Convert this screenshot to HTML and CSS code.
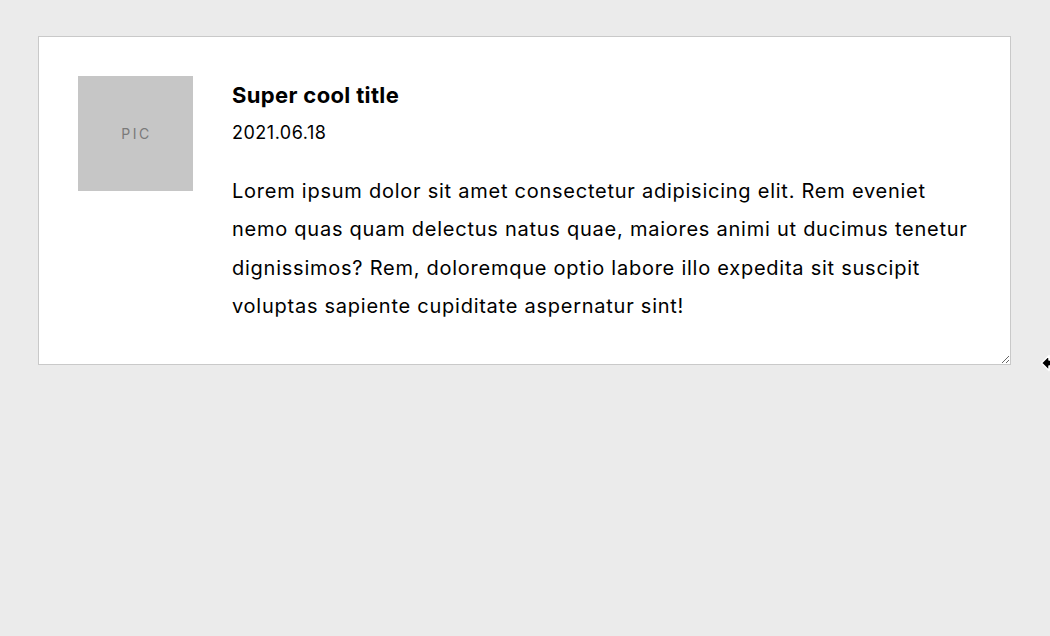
FILE: index.html
```html
<!DOCTYPE html>
<html lang="en">
<head>
<meta charset="utf-8">
<title>Card</title>
<link rel="stylesheet" href="styles.css">
</head>
<body>
<div class="card">
  <div class="pic">PIC</div>
  <div class="content">
    <h2 class="title">Super cool title</h2>
    <div class="date">2021.06.18</div>
    <p class="text">Lorem ipsum dolor sit amet consectetur adipisicing elit. Rem eveniet nemo quas quam delectus natus quae, maiores animi ut ducimus tenetur dignissimos? Rem, doloremque optio labore illo expedita sit suscipit voluptas sapiente cupiditate aspernatur sint!</p>
  </div>
</div>
<svg class="cursor" width="14" height="20" viewBox="0 0 14 20">
  <path d="M1.5 10 L9 2.5 L9 7 L13 7 L13 13 L9 13 L9 17.5 Z" fill="#000" stroke="#fff" stroke-width="1.5" stroke-linejoin="round"/>
</svg>
</body>
</html>
```
FILE: styles.css
```css
html, body {
  margin: 0;
  padding: 0;
}
body {
  background: #ebebeb;
  font-family: Inter, "Noto Sans", sans-serif;
  color: #000;
  padding: 36px 39px 0 38px;
  height: 636px;
  box-sizing: border-box;
  overflow: hidden;
  position: relative;
}
.card {
  background: #fff;
  border: 1px solid #c9c9c9;
  padding: 39px;
  display: flex;
  gap: 39px;
  align-items: flex-start;
  resize: both;
  overflow: auto;
  line-height: 38px;
}
.pic {
  flex: 0 0 115px;
  width: 115px;
  height: 115px;
  background: #c6c6c6;
  color: #7a7a7a;
  font-size: 14px;
  letter-spacing: 2.5px;
  display: flex;
  align-items: center;
  justify-content: center;
  padding-left: 2px;
  box-sizing: border-box;
}
.content {
  flex: 1;
  min-width: 0;
}
.title {
  margin: 0;
  font-size: 22px;
  font-weight: 700;
  line-height: 38px;
  letter-spacing: 0.35px;
}
.date {
  font-size: 18px;
  line-height: 38px;
  letter-spacing: 0.5px;
}
.text {
  margin: 20px 0 0;
  font-size: 20px;
  line-height: 38.3px;
  letter-spacing: 0.75px;
}
.cursor {
  position: absolute;
  left: 1040px;
  top: 353px;
}
```
